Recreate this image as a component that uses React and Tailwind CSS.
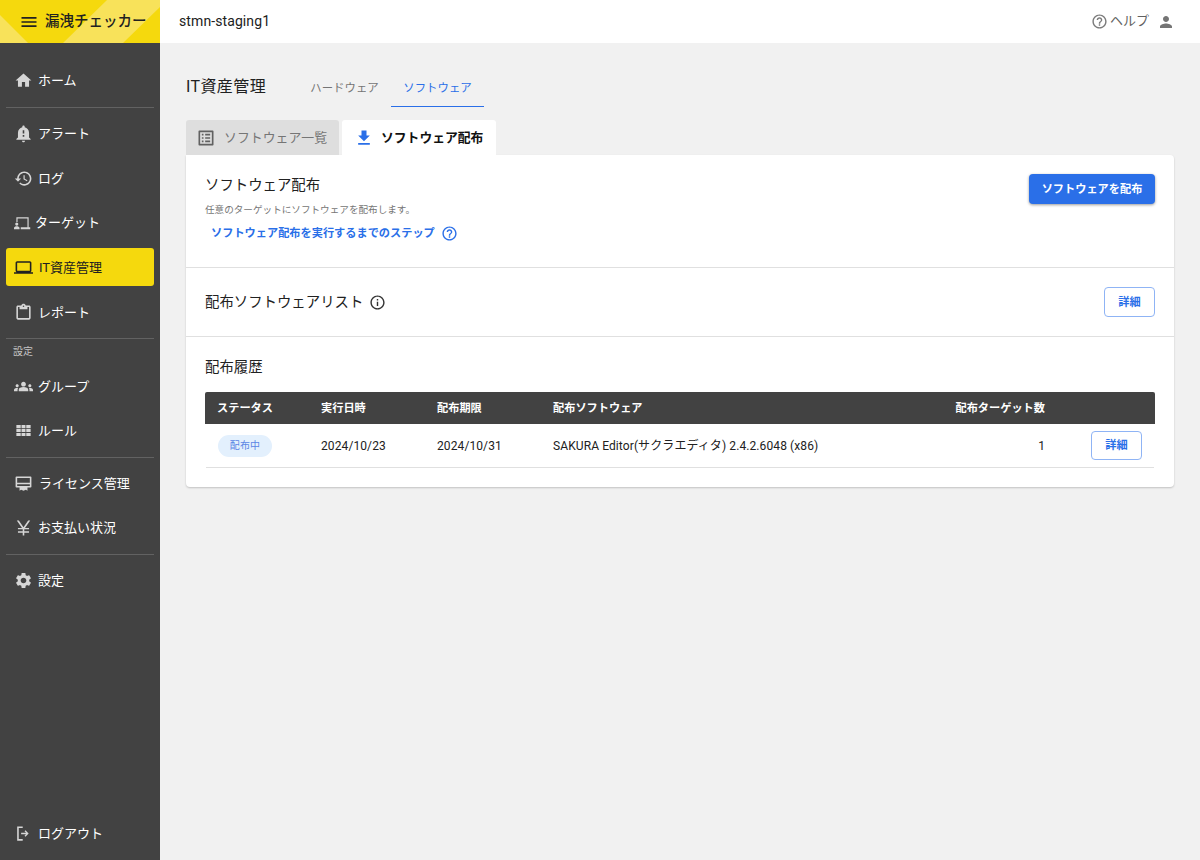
import React from "react";

const Icon = ({ d, className = "" }) => (
  <svg viewBox="0 0 24 24" fill="currentColor" className={className}>
    <path d={d} />
  </svg>
);

const paths = {
  menu: "M3 18h18v-2H3v2zm0-5h18v-2H3v2zm0-7v2h18V6H3z",
  home: "M10 20v-6h4v6h5v-8h3L12 3 2 12h3v8z",
  bell: "M12 23c1.1 0 1.99-.89 1.99-1.99h-3.98c0 1.1.89 1.99 1.99 1.99zm7-6v-6c0-3.35-2.36-6.15-5.5-6.83V3.5c0-.83-.67-1.5-1.5-1.5s-1.5.67-1.5 1.5v.67C7.36 4.85 5 7.65 5 11v6l-2 2v1h18v-1l-2-2zm-6-1h-2v-2h2v2zm0-4h-2V8h2v4z",
  history:
    "M13 3c-4.97 0-9 4.03-9 9H1l3.89 3.89.07.14L9 12H6c0-3.87 3.13-7 7-7s7 3.13 7 7-3.13 7-7 7c-1.93 0-3.68-.79-4.94-2.06l-1.42 1.42C8.27 19.99 10.51 21 13 21c4.97 0 9-4.03 9-9s-4.03-9-9-9zm-1 5v5l4.28 2.54.72-1.21-3.5-2.08V8H12z",
  laptop:
    "M20 18c1.1 0 1.99-.9 1.99-2L22 6c0-1.1-.9-2-2-2H4c-1.1 0-2 .9-2 2v10c0 1.1.9 2 2 2H0v2h24v-2h-4zM4 6h16v10H4V6z",
  clipboard:
    "M19 3h-4.18C14.4 1.84 13.3 1 12 1s-2.4.84-2.82 2H5c-1.1 0-2 .9-2 2v14c0 1.1.9 2 2 2h14c1.1 0 2-.9 2-2V5c0-1.1-.9-2-2-2zm-7 0c.55 0 1 .45 1 1s-.45 1-1 1-1-.45-1-1 .45-1 1-1zm7 16H5V5h2v3h10V5h2v14z",
  groups:
    "M12 12.75c1.63 0 3.07.39 4.24.9 1.08.48 1.76 1.56 1.76 2.73V18H6v-1.61c0-1.18.68-2.26 1.76-2.73 1.17-.52 2.61-.91 4.24-.91zM4 13c1.1 0 2-.9 2-2s-.9-2-2-2-2 .9-2 2 .9 2 2 2zm1.13 1.1C4.76 14.04 4.39 14 4 14c-.99 0-1.93.21-2.78.58C.48 14.9 0 15.62 0 16.43V18h4.5v-1.61c0-.83.23-1.61.63-2.29zM20 13c1.1 0 2-.9 2-2s-.9-2-2-2-2 .9-2 2 .9 2 2 2zm4 3.43c0-.81-.48-1.53-1.22-1.85C21.93 14.21 20.99 14 20 14c-.39 0-.76.04-1.13.1.4.68.63 1.46.63 2.29V18H24v-1.57zM12 6c1.66 0 3 1.34 3 3s-1.34 3-3 3-3-1.34-3-3 1.34-3 3-3z",
  grid: "M3 5h5.5v4H3zM9.5 5h5v4h-5zM15.5 5H21v4h-5.5zM3 10h5.5v4H3zM9.5 10h5v4h-5zM15.5 10H21v4h-5.5zM3 15h5.5v4H3zM9.5 15h5v4h-5zM15.5 15H21v4h-5.5z",
  gear: "M19.14 12.94c.04-.3.06-.61.06-.94 0-.32-.02-.64-.07-.94l2.03-1.58c.18-.14.23-.41.12-.61l-1.92-3.32c-.12-.22-.37-.29-.59-.22l-2.39.96c-.5-.38-1.03-.7-1.62-.94l-.36-2.54c-.04-.24-.24-.41-.48-.41h-3.84c-.24 0-.43.17-.47.41l-.36 2.54c-.59.24-1.13.57-1.62.94l-2.39-.96c-.22-.08-.47 0-.59.22L2.74 8.87c-.12.21-.08.47.12.61l2.03 1.58c-.05.3-.09.63-.09.94s.02.64.07.94l-2.03 1.58c-.18.14-.23.41-.12.61l1.92 3.32c.12.22.37.29.59.22l2.39-.96c.5.38 1.03.7 1.62.94l.36 2.54c.05.24.24.41.48.41h3.84c.24 0 .44-.17.47-.41l.36-2.54c.59-.24 1.13-.56 1.62-.94l2.39.96c.22.08.47 0 .59-.22l1.92-3.32c.12-.22.07-.47-.12-.61l-2.01-1.58zM12 15.6c-1.98 0-3.6-1.62-3.6-3.6s1.62-3.6 3.6-3.6 3.6 1.62 3.6 3.6-1.62 3.6-3.6 3.6z",
  help: "M11 18h2v-2h-2v2zm1-16C6.48 2 2 6.48 2 12s4.48 10 10 10 10-4.48 10-10S17.52 2 12 2zm0 18c-4.41 0-8-3.59-8-8s3.59-8 8-8 8 3.59 8 8-3.59 8-8 8zm0-14c-2.21 0-4 1.79-4 4h2c0-1.1.9-2 2-2s2 .9 2 2c0 2-3 1.75-3 5h2c0-2.25 3-2.5 3-5 0-2.21-1.79-4-4-4z",
  info: "M11 7h2v2h-2zm0 4h2v6h-2zm1-9C6.48 2 2 6.48 2 12s4.48 10 10 10 10-4.48 10-10S17.52 2 12 2zm0 18c-4.41 0-8-3.59-8-8s3.59-8 8-8 8 3.59 8 8-3.59 8-8 8z",
  person:
    "M12 12c2.21 0 4-1.79 4-4s-1.79-4-4-4-4 1.79-4 4 1.79 4 4 4zm0 2c-2.67 0-8 1.34-8 4v2h16v-2c0-2.66-5.33-4-8-4z",
  download: "M19 9h-4V3H9v6H5l7 7 7-7zM5 18v2h14v-2H5z",
  list: "M19 5v14H5V5h14m1.1-2H3.9c-.5 0-.9.4-.9.9v16.2c0 .4.4.9.9.9h16.2c.4 0 .9-.5.9-.9V3.9c0-.5-.5-.9-.9-.9zM11 7h6v2h-6V7zm0 4h6v2h-6v-2zm0 4h6v2h-6zM7 7h2v2H7zm0 4h2v2H7zm0 4h2v2H7z",
  target:
    "M3 5.5h15.5v12.5H17V7H4.5v4.5H3zM3.5 12a2 2 0 1 1 0 4 2 2 0 0 1 0-4zM0 20.5v-1.7c0-1.2 2-2 3.5-2s3.5.8 3.5 2v1.7zM8.5 18H20.5v2.5H8.5z",
  license:
    "M3 3h18c.6 0 1 .4 1 1v12c0 .6-.4 1-1 1h-4v4l-2-1-3 1-3-1-2 1v-4H3c-.6 0-1-.4-1-1V4c0-.6.4-1 1-1zm1 2v6h16V5H4zm0 8v2h16v-2H4z",
  yen: "M3.5 3h2.6L12 11.6 17.9 3h2.6l-6.6 9.5H19v1.8h-6v2.4h6v1.8h-6V22h-2v-3.5H5v-1.8h6v-2.4H5v-1.8h5.1z",
  logout:
    "M4 3h7v2H6v14h5v2H4zM14.5 8l4 4-4 4-1.2-1.2 1.9-1.9H9v-1.8h6.2l-1.9-1.9z",
};

const NavItem = ({ icon, label, active, textClass = "ml-[5px]" }) => (
  <div
    className={`mx-[6px] flex items-center rounded-[3px] pl-[8px] ${
      active
        ? "my-[3.3px] h-[38px] bg-[#f5d90d] text-[#212121]"
        : "h-[44.6px] text-white"
    }`}
  >
    <Icon
      d={paths[icon]}
      className={`h-[19px] w-[19px] shrink-0 ${
        active ? "text-[#212121]" : "text-[#d6d6d6]"
      }`}
    />
    <span className={`${textClass} text-[13px] leading-none`}>{label}</span>
  </div>
);

const Divider = () => <div className="mx-[6px] h-px bg-[#626262]" />;

const OutlineButton = ({ className = "" }) => (
  <button
    className={`rounded-[4px] border border-[#8fb4f5] bg-white pt-[2px] text-[11.2px] font-bold text-[#2a6fe8] ${className}`}
  >
    詳細
  </button>
);

export default function App() {
  return (
    <div
      className="flex h-[860px] w-[1200px] overflow-hidden bg-[#f1f1f1] text-[#212121]"
      style={{ fontFamily: 'Roboto, "Noto Sans CJK JP", sans-serif' }}
    >
      <aside className="flex w-[160px] shrink-0 flex-col bg-[#424242]">
        <div className="relative flex h-[43px] items-center overflow-hidden bg-[#f5d90d] pl-[21px]">
          <svg
            viewBox="0 0 160 43"
            className="absolute inset-0 h-full w-full text-[#f8e25a]"
            fill="currentColor"
          >
            <path d="M0 15l28 28H0zM63 43l44-43h53v7l-37 36z" />
          </svg>
          <Icon d={paths.menu} className="relative -ml-[2px] h-[20px] w-[20px] text-[#212121]" />
          <span className="relative ml-[6px] text-[14.5px] font-medium text-[#212121]">
            漏洩チェッカー
          </span>
        </div>

        <nav className="flex flex-1 flex-col pt-[15.7px]">
          <NavItem icon="home" label="ホーム" />
          <div className="mt-[3.5px] mb-[3.6px]"><Divider /></div>
          <NavItem icon="bell" label="アラート" />
          <NavItem icon="history" label="ログ" />
          <NavItem icon="target" label="ターゲット" textClass="ml-[2px]" />
          <NavItem icon="laptop" label="IT資産管理" textClass="ml-[6px]" active />
          <NavItem icon="clipboard" label="レポート" />
          <div className="mt-[4px]"><Divider /></div>
          <div className="mt-[7px] mb-[5.5px] ml-[13px] text-[10px] leading-[12px] text-[#c4c4c4]">設定</div>
          <NavItem icon="groups" label="グループ" />
          <NavItem icon="grid" label="ルール" />
          <div className="mt-[4px] mb-[3px]"><Divider /></div>
          <NavItem icon="license" label="ライセンス管理" textClass="ml-[6px]" />
          <NavItem icon="yen" label="お支払い状況" />
          <div className="mt-[4px] mb-[2.6px]"><Divider /></div>
          <NavItem icon="gear" label="設定" />
          <div className="mt-auto mb-[4px]">
            <NavItem icon="logout" label="ログアウト" />
          </div>
        </nav>
      </aside>

      <div className="flex min-w-0 flex-1 flex-col">
        <header className="flex h-[43px] shrink-0 items-center justify-between bg-white pr-[25px] pl-[19px]">
          <span className="text-[14px] tracking-[0.1px]">stmn-staging1</span>
          <div className="flex items-center text-[#616161]">
            <Icon d={paths.help} className="h-[17px] w-[17px] text-[#7a7a7a]" />
            <span className="mb-[2px] ml-[2px] text-[13px] leading-none">ヘルプ</span>
            <Icon d={paths.person} className="ml-[8px] h-[18px] w-[18px] text-[#757575]" />
          </div>
        </header>

        <main className="flex-1 px-[26px]">
          <div className="flex h-[64px] items-end">
            <h1 className="mb-[8px] w-[112px] text-[16px] leading-[24px] tracking-[0.4px]">IT資産管理</h1>
            <div className="flex w-[93px] justify-center pb-[9px] text-[11.4px] leading-[20px] text-[#757575]">
              ハードウェア
            </div>
            <div className="flex w-[93px] justify-center border-b border-[#2a6fe8] pb-[8px] text-[11.4px] leading-[20px] text-[#2a6fe8]">
              ソフトウェア
            </div>
          </div>

          <div className="mt-[13px] flex h-[35px] items-stretch gap-[3px]">
            <div className="flex w-[153px] items-center rounded-t-[3px] bg-[#dedede] pl-[10px] text-[#757575]">
              <Icon d={paths.list} className="h-[20px] w-[20px] text-[#616161]" />
              <span className="ml-[8px] text-[12.9px]">ソフトウェア一覧</span>
            </div>
            <div className="flex w-[154px] items-center rounded-t-[3px] bg-white pl-[12px]">
              <Icon d={paths.download} className="h-[20px] w-[20px] text-[#2a6fe8]" />
              <span className="ml-[7px] text-[12.8px] font-bold text-[#111]">ソフトウェア配布</span>
            </div>
          </div>

          <section className="rounded-b-[4px] rounded-tr-[4px] bg-white shadow-[0_1px_2px_rgba(0,0,0,0.2)]">
            <div className="flex h-[113px] justify-between border-b border-[#e0e0e0] pt-[19px] pr-[19px] pl-[19px]">
              <div className="pt-px">
                <h2 className="text-[14.4px] leading-[22px]">ソフトウェア配布</h2>
                <p className="mt-[6px] text-[9.6px] leading-[14px] text-[#757575]">
                  任意のターゲットにソフトウェアを配布します。
                </p>
                <div className="mt-[5px] ml-[6px] flex items-center text-[#2a6fe8]">
                  <span className="text-[11.2px] leading-[24px] font-bold">
                    ソフトウェア配布を実行するまでのステップ
                  </span>
                  <Icon d={paths.help} className="mb-[2px] ml-[6px] h-[17px] w-[17px]" />
                </div>
              </div>
              <button className="h-[30px] w-[126px] rounded-[4px] bg-[#2a6fe8] pt-[2px] text-[11.2px] font-bold text-white shadow-[0_1px_3px_rgba(0,0,0,0.4)]">
                ソフトウェアを配布
              </button>
            </div>

            <div className="flex h-[69px] items-center justify-between border-b border-[#e0e0e0] pr-[19px] pl-[19px]">
              <div className="flex items-center">
                <h2 className="pt-[2px] text-[14.4px] leading-[22px]">配布ソフトウェアリスト</h2>
                <Icon d={paths.info} className="ml-[6px] h-[17px] w-[17px] text-[#333]" />
              </div>
              <OutlineButton className="h-[30px] w-[51px]" />
            </div>

            <div className="px-[19px] pt-[20px] pb-[19px]">
              <h2 className="text-[14.4px] leading-[22px]">配布履歴</h2>
              <div className="mt-[13px] grid h-[32px] grid-cols-[104px_116px_116px_1fr_120px_98px] items-center rounded-t-[2px] bg-[#424242] pt-[2px] text-[11.2px] font-bold text-white">
                <div className="px-3">ステータス</div>
                <div className="px-3">実行日時</div>
                <div className="px-3">配布期限</div>
                <div className="px-3">配布ソフトウェア</div>
                <div className="px-3 text-right whitespace-nowrap">配布ターゲット数</div>
                <div />
              </div>
              <div className="mx-px grid h-[44px] grid-cols-[103px_116px_116px_1fr_120px_97px] items-center border-b border-[#e0e0e0] text-[12px] tracking-[0.1px] text-[#212121]">
                <div className="pl-[12px]">
                  <span className="flex h-[22px] w-[54px] items-center justify-center rounded-full bg-[#e3f0fd] text-[10px] text-[#5b86e5]">
                    配布中
                  </span>
                </div>
                <div className="px-3">2024/10/23</div>
                <div className="px-3">2024/10/31</div>
                <div className="px-3 whitespace-nowrap">SAKURA Editor(サクラエディタ) 2.4.2.6048 (x86)</div>
                <div className="px-3 text-right">1</div>
                <div className="flex justify-end pr-[12px]">
                  <OutlineButton className="h-[29px] w-[51px]" />
                </div>
              </div>
            </div>
          </section>
        </main>
      </div>
    </div>
  );
}
